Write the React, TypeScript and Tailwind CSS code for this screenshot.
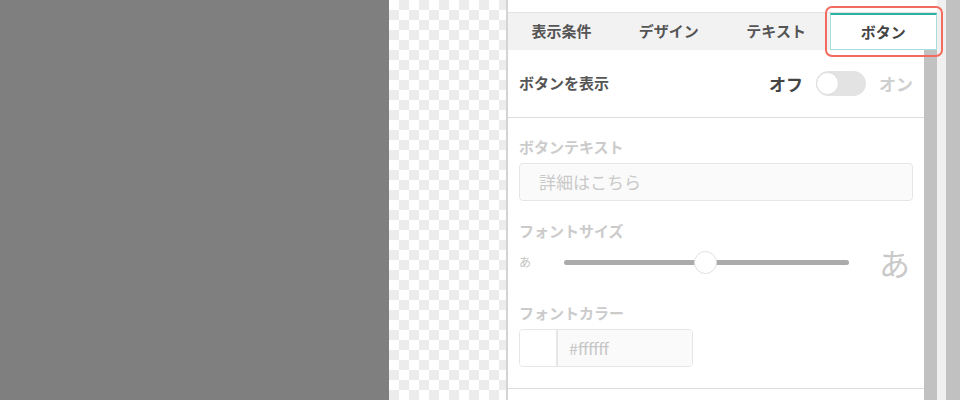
export default function App() {
  const tabs = ['表示条件', 'デザイン', 'テキスト', 'ボタン'];

  return (
    <div className="relative flex h-[400px] w-[960px] overflow-hidden bg-white font-['Noto_Sans_CJK_JP','Noto_Sans',sans-serif]">
      {/* left canvas */}
      <div className="w-[389px] shrink-0 bg-[#7f7f7f]" />
      <div className="w-[117px] shrink-0 bg-[conic-gradient(#ececec_25%,#ffffff_0_50%,#ececec_0_75%,#ffffff_0)] bg-[length:20px_20px]" />

      {/* settings panel */}
      <div className="flex w-[431px] shrink-0 flex-col border-l-2 border-[#d4d4d4] bg-white">
        <div className="h-[12px] shrink-0" />
        <div className="grid h-[38px] shrink-0 grid-cols-4 border-t border-[#e2e2e2] bg-[#f2f2f2]">
          {tabs.map((t, i) =>
            i === 3 ? (
              <div key={t} className="flex items-center justify-center border-x border-b border-t-2 border-x-[#a9ded8] border-b-[#a9ded8] border-t-[#2bb3a4] bg-white text-[15px] font-bold text-[#444]">
                {t}
              </div>
            ) : (
              <div key={t} className="flex items-center justify-center text-[15px] font-bold text-[#555]">
                {t}
              </div>
            )
          )}
        </div>

        <div className="flex flex-1">
          <div className="flex-1">
            <div className="flex h-[68px] items-center border-b border-[#dedede] px-[11px]">
              <span className="text-[15px] font-bold text-[#555]">ボタンを表示</span>
              <div className="ml-auto flex items-center">
                <span className="text-[17px] font-bold text-[#444]">オフ</span>
                <div className="ml-[13px] flex h-[25px] w-[50px] items-center rounded-full bg-[#e3e3e3]">
                  <div className="h-[23px] w-[23px] rounded-full border border-[#dcdcdc] bg-white" />
                </div>
                <span className="ml-[13px] text-[17px] font-bold text-[#cfcfcf]">オン</span>
              </div>
            </div>

            <div className="flex flex-col border-b border-[#dedede] px-[11px] pb-[21px] pt-[19px]">
              <div className="text-[15px] font-bold leading-[20px] text-[#cbcbcb]">ボタンテキスト</div>
              <div className="mt-[6px] flex h-[38px] items-center rounded-[4px] border border-[#e6e6e6] bg-[#fafafa] pl-[19px] text-[17px] text-[#c9c9c9]">
                詳細はこちら
              </div>

              <div className="mt-[20px] text-[15px] font-bold leading-[20px] text-[#cbcbcb]">フォントサイズ</div>
              <div className="mt-[6px] flex h-[30px] items-center">
                <span className="w-[12px] text-[12px] text-[#c4c4c4]">あ</span>
                <div className="relative ml-[33px] h-[5px] w-[285px] rounded-full bg-[#ababab]">
                  <div className="absolute left-[130px] top-[-9px] h-[23px] w-[23px] rounded-full border border-[#e0e0e0] bg-white" />
                </div>
                <span className="ml-[30px] text-[31px] leading-none text-[#c9c9c9]">あ</span>
              </div>

              <div className="mt-[26px] text-[15px] font-bold leading-[20px] text-[#cbcbcb]">フォントカラー</div>
              <div className="mt-[6px] flex h-[38px] w-[174px] overflow-hidden rounded-[4px] border border-[#e6e6e6]">
                <div className="w-[38px] border-r-2 border-[#e6e6e6] bg-white" />
                <div className="flex flex-1 items-center bg-[#fafafa] pl-[11px] text-[16px] text-[#c6c6c6]">#ffffff</div>
              </div>
            </div>
          </div>
          <div className="w-[13px] bg-[#c1c1c1]" />
        </div>
      </div>

      <div className="w-[9px] shrink-0 bg-[#f0f0f0]" />
      <div className="flex-1 bg-[#c1c1c1]" />

      {/* highlight annotation */}
      <div className="absolute left-[825px] top-[6px] h-[51px] w-[118px] rounded-[7px] border-2 border-[#f26b5e]" />
    </div>
  );
}
